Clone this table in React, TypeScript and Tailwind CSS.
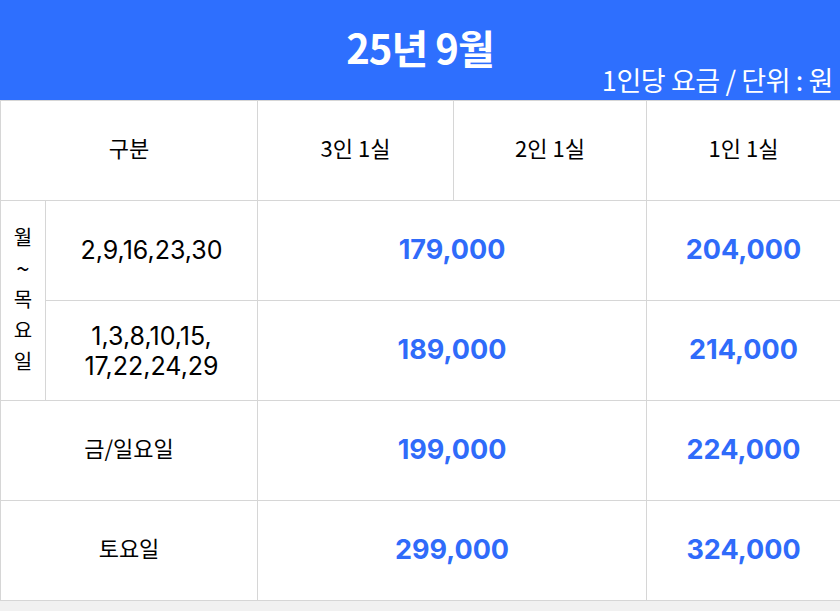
import React from 'react';

const kr = "font-['Noto_Sans_CJK_KR',sans-serif]";
const num = "font-['Inter','Noto_Sans_CJK_KR',sans-serif]";

const cell = 'border border-[#d6d6d6] text-center align-middle';
const label = `${cell} ${kr} text-[22px] pb-[6px]`;

function Price({ value }: { value: string }) {
  return <span className={`${num} text-[27px] font-bold text-[#2f6bfa]`}>{value}</span>;
}

export default function App() {
  return (
    <div className="w-[840px] bg-[#f1f1f1] min-h-[611px]">
      <header className="h-[100px] bg-[#2e6ffe] text-white flex flex-col">
        <h1 className={`${kr} pt-[23px] text-center text-[40px] font-bold leading-[48px] tracking-[-1px]`}>
          25년 9월
        </h1>
        <p className={`${kr} text-right pr-[7px] text-[27px] leading-[30px] -mt-[6px] tracking-[-0.4px]`}>
          1인당 요금 / 단위 : 원
        </p>
      </header>

      <table className="w-[840px] table-fixed bg-white text-black">
        <colgroup>
          <col className="w-[45px]" />
          <col className="w-[212px]" />
          <col className="w-[196px]" />
          <col className="w-[193px]" />
          <col className="w-[194px]" />
        </colgroup>
        <tbody>
          <tr className="h-[100px]">
            <td colSpan={2} className={label}>구분</td>
            <td className={label}>3인 1실</td>
            <td className={label}>2인 1실</td>
            <td className={label}>1인 1실</td>
          </tr>
          <tr className="h-[100px]">
            <td rowSpan={2} className={`${cell} ${kr} text-[20px] leading-[31px] pb-[4px]`}>
              <div className="flex flex-col items-center">
                <span>월</span>
                <span className="text-[24px]">~</span>
                <span>목</span>
                <span>요</span>
                <span>일</span>
              </div>
            </td>
            <td className={`${cell} ${num} text-[25px]`}>2,9,16,23,30</td>
            <td colSpan={2} className={cell}><Price value="179,000" /></td>
            <td className={cell}><Price value="204,000" /></td>
          </tr>
          <tr className="h-[100px]">
            <td className={`${cell} ${num} text-[25px] leading-[30px]`}>
              1,3,8,10,15,
              <br />
              17,22,24,29
            </td>
            <td colSpan={2} className={cell}><Price value="189,000" /></td>
            <td className={cell}><Price value="214,000" /></td>
          </tr>
          <tr className="h-[100px]">
            <td colSpan={2} className={label}>금/일요일</td>
            <td colSpan={2} className={cell}><Price value="199,000" /></td>
            <td className={cell}><Price value="224,000" /></td>
          </tr>
          <tr className="h-[100px]">
            <td colSpan={2} className={label}>토요일</td>
            <td colSpan={2} className={cell}><Price value="299,000" /></td>
            <td className={cell}><Price value="324,000" /></td>
          </tr>
        </tbody>
      </table>
    </div>
  );
}
